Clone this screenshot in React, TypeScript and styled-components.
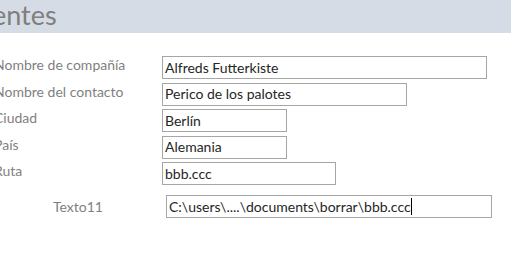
import styled, { createGlobalStyle } from "styled-components";

const GlobalStyle = createGlobalStyle`
  html, body {
    margin: 0;
    padding: 0;
    background: #ffffff;
    overflow: hidden;
  }
  body {
    font-family: Lato, "Liberation Sans", sans-serif;
  }
`;

const fields = [
  { label: "Nombre de compañía", value: "Alfreds Futterkiste", width: 325 },
  { label: "Nombre del contacto", value: "Perico de los palotes", width: 245 },
  { label: "Ciudad", value: "Berlín", width: 125 },
  { label: "País", value: "Alemania", width: 125 },
  { label: "Ruta", value: "bbb.ccc", width: 174 },
];

const App = () => {
  return (
    <Page>
      <GlobalStyle />
      <Header>
        <Title>Clientes</Title>
      </Header>
      <Form>
        {fields.map((f) => (
          <Row key={f.label}>
            <Label>{f.label}</Label>
            <Box $width={f.width}>{f.value}</Box>
          </Row>
        ))}
      </Form>
      <ExtraRow>
        <ExtraLabel>Texto11</ExtraLabel>
        <Box $width={326}>
          C:\users\....\documents\borrar\bbb.ccc
          <Caret />
        </Box>
      </ExtraRow>
    </Page>
  );
};

export default App;

const Page = styled.div`
  width: 511px;
  height: 257px;
  overflow: hidden;
  background: #ffffff;
`;

const Header = styled.div`
  height: 33px;
  background: #d6dce5;
  display: flex;
  align-items: center;
  overflow: hidden;
`;

const Title = styled.div`
  margin-left: -39px;
  font-size: 27px;
  color: #7f7f7f;
  line-height: 1;
  margin-top: -4px;
`;

const Form = styled.div`
  display: flex;
  flex-direction: column;
  gap: 3.5px;
  padding-top: 23px;
`;

const Row = styled.div`
  display: flex;
  align-items: flex-start;
  height: 23px;
`;

const Label = styled.div`
  width: 168px;
  margin-left: -6px;
  font-size: 14px;
  color: #7f7f7f;
  line-height: 18px;
  white-space: nowrap;
`;

const Box = styled.div<{ $width: number }>`
  box-sizing: border-box;
  width: ${(p) => p.$width}px;
  height: 23px;
  border: 1px solid #a6a6a6;
  padding: 0 2px;
  font-size: 14px;
  line-height: 20px;
  color: #262626;
  white-space: nowrap;
  display: flex;
  align-items: center;
`;

const ExtraRow = styled.div`
  display: flex;
  align-items: center;
  margin-top: 10px;
`;

const ExtraLabel = styled.div`
  width: 113px;
  padding-left: 53px;
  font-size: 14px;
  color: #7f7f7f;
`;

const Caret = styled.span`
  display: inline-block;
  width: 1px;
  height: 17px;
  background: #000000;
`;
